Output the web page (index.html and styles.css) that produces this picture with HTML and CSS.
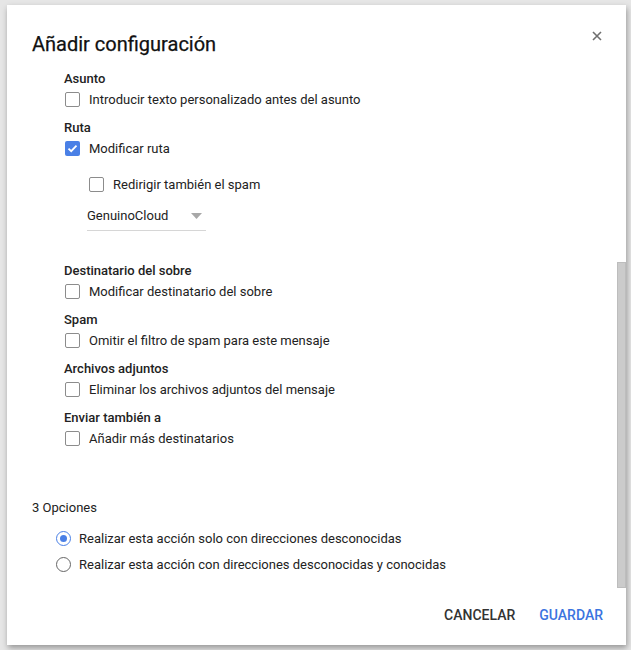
FILE: index.html
```html
<!DOCTYPE html>
<html lang="es">
<head>
    <meta charset="UTF-8">
    <title>Añadir configuración</title>
    <link rel="stylesheet" href="styles.css">
</head>
<body>
    <div class="dialog">
        <div class="main">
            <div class="header">
                <h2>Añadir configuración</h2>
                <span class="close">
                    <svg width="10" height="10" viewBox="0 0 10 10"><path d="M1 1L9 9M9 1L1 9" stroke="#6f6f6f" stroke-width="1.6"/></svg>
                </span>
            </div>

            <div class="sections">
                <div class="group">
                    <div class="group-label">Asunto</div>
                    <label class="row"><span class="box"></span>Introducir texto personalizado antes del asunto</label>
                </div>
                <div class="group">
                    <div class="group-label">Ruta</div>
                    <label class="row"><span class="box checked">
                        <svg width="15" height="15" viewBox="0 0 15 15"><path d="M3.5 7.6L6.2 10.2L11.5 4.6" fill="none" stroke="#fff" stroke-width="1.8"/></svg>
                    </span>Modificar ruta</label>
                    <div class="sub">
                        <label class="row"><span class="box"></span>Redirigir también el spam</label>
                        <div class="dropdown">
                            <span>GenuinoCloud</span>
                            <svg width="11" height="6" viewBox="0 0 11 6"><path d="M0 0H11L5.5 6Z" fill="#a8a8a8"/></svg>
                        </div>
                    </div>
                </div>
                <div class="group spaced">
                    <div class="group-label">Destinatario del sobre</div>
                    <label class="row"><span class="box"></span>Modificar destinatario del sobre</label>
                </div>
                <div class="group">
                    <div class="group-label">Spam</div>
                    <label class="row"><span class="box"></span>Omitir el filtro de spam para este mensaje</label>
                </div>
                <div class="group">
                    <div class="group-label">Archivos adjuntos</div>
                    <label class="row"><span class="box"></span>Eliminar los archivos adjuntos del mensaje</label>
                </div>
                <div class="group">
                    <div class="group-label">Enviar también a</div>
                    <label class="row"><span class="box"></span>Añadir más destinatarios</label>
                </div>
            </div>

            <div class="options">
                <div class="options-title">3 Opciones</div>
                <label class="radio-row first"><span class="radio on"></span>Realizar esta acción solo con direcciones desconocidas</label>
                <label class="radio-row"><span class="radio"></span>Realizar esta acción con direcciones desconocidas y conocidas</label>
            </div>

            <div class="footer">
                <button class="btn">CANCELAR</button>
                <button class="btn primary">GUARDAR</button>
            </div>
        </div>
        <div class="track">
            <div class="thumb"></div>
        </div>
    </div>
</body>
</html>
```

FILE: styles.css
```css
body {
    margin: 0;
    background: #e6e6e6;
    font-family: Roboto, "Liberation Sans", Arial, sans-serif;
    color: #222;
    height: 650px;
    overflow: hidden;
}
.dialog {
    margin: 5px 0 0 7px;
    width: 619px;
    height: 640px;
    background: #fff;
    display: flex;
    box-shadow: 1px 3px 6px rgba(0,0,0,0.35);
}
.main {
    flex: 1;
    padding: 27px 14px 0 25px;
    display: flex;
    flex-direction: column;
}
.header {
    display: flex;
    justify-content: space-between;
    align-items: flex-start;
}
.header h2 {
    margin: 0;
    font-size: 20px;
    line-height: 24px;
    font-weight: 400;
    color: #111;
    -webkit-text-stroke: 0.25px #111;
}
.close {
    margin-top: -1px;
    margin-right: 1px;
    display: flex;
}
.sections {
    margin: 13px 0 0 32px;
}
.group {
    margin-bottom: 9px;
}
.group.spaced {
    margin-top: 30px;
}
.group-label {
    font-size: 13px;
    line-height: 20px;
    font-weight: 500;
}
.row {
    display: flex;
    align-items: center;
    height: 20px;
    font-size: 13px;
}
.box {
    width: 15px;
    height: 15px;
    box-sizing: border-box;
    border: 1.5px solid #8c8c8c;
    border-radius: 2px;
    margin: 0 9px 0 1px;
    flex-shrink: 0;
}
.box.checked {
    background: #4a80e6;
    border: none;
    display: flex;
}
.sub {
    margin-left: 24px;
    padding-top: 16px;
}
.dropdown {
    margin: 11px 0 0 -1px;
    width: 115px;
    height: 20px;
    padding: 0 4px 5px 0;
    border-bottom: 1px solid #d6d6d6;
    display: flex;
    justify-content: space-between;
    align-items: center;
    font-size: 13px;
}
.dropdown svg {
    margin-top: 2px;
}
.options {
    margin-top: 41px;
}
.options-title {
    font-size: 13px;
    line-height: 20px;
}
.radio-row {
    display: flex;
    align-items: center;
    height: 20px;
    margin: 6px 0 0 24px;
    font-size: 13px;
}
.radio-row.first {
    margin-top: 10px;
}
.radio {
    width: 15px;
    height: 15px;
    box-sizing: border-box;
    border: 1.5px solid #666;
    border-radius: 50%;
    margin-right: 8px;
    display: flex;
    align-items: center;
    justify-content: center;
}
.radio.on {
    border-color: #4a80e6;
}
.radio.on::after {
    content: "";
    width: 7px;
    height: 7px;
    border-radius: 50%;
    background: #4a80e6;
}
.footer {
    margin-top: 31px;
    display: flex;
    justify-content: flex-end;
    gap: 24px;
}
.btn {
    border: none;
    background: none;
    padding: 0;
    font-family: Roboto, "Liberation Sans", Arial, sans-serif;
    font-size: 14px;
    line-height: 20px;
    font-weight: 500;
    color: #333;
}
.btn.primary {
    color: #3b74e0;
}
.track {
    width: 9px;
}
.thumb {
    margin-top: 257px;
    height: 326px;
    background: #cbcbcb;
    border: 1px solid #bdbdbd;
    box-sizing: border-box;
}
```
